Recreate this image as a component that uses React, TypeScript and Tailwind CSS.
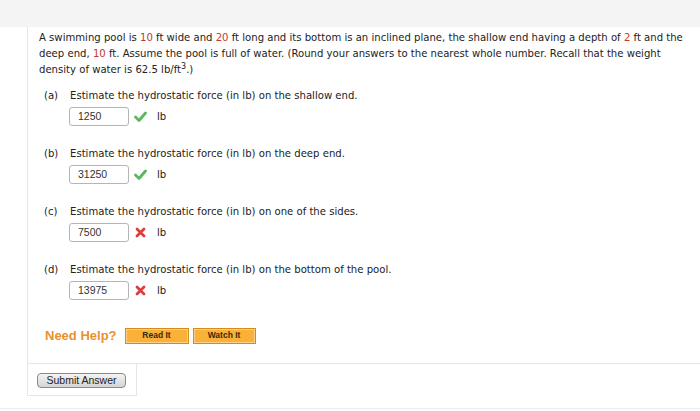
import React from "react";

const verdana = { fontFamily: '"DejaVu Sans", Verdana, sans-serif' };
const arial = { fontFamily: '"Liberation Sans", Arial, sans-serif' };

function Check() {
  return (
    <svg width="13" height="11" viewBox="0 0 13 11">
      <path d="M1.5 6 L5 9.5 L11.5 2" fill="none" stroke="#5cb85c" strokeWidth="2.8" strokeLinecap="round" strokeLinejoin="round" />
    </svg>
  );
}

function Cross() {
  return (
    <svg width="11" height="11" viewBox="0 0 11 11">
      <path d="M2 2 L9 9 M9 2 L2 9" fill="none" stroke="#e23b3b" strokeWidth="2.8" strokeLinecap="round" />
    </svg>
  );
}

function Part({ label, q, value, ok }: { label: string; q: string; value: string; ok: boolean }) {
  return (
    <div className="flex flex-col">
      <div className="flex h-[16px] items-center text-[10.1px] text-[#222]" style={verdana}>
        <span className="w-[31px] pl-[5px]">{label}</span>
        <span>{q}</span>
      </div>
      <div className="mt-[3px] flex h-[19px] items-center pl-[30px]">
        <div
          className="flex h-[19px] w-[60px] items-center rounded-[3px] border border-[#b5b5b5] pl-[8px] text-[10.5px] text-[#333]"
          style={arial}
        >
          {value}
        </div>
        <div className="ml-[5px] flex w-[13px] items-center justify-center">{ok ? <Check /> : <Cross />}</div>
        <span className="ml-[10px] text-[10.1px] text-[#222]" style={verdana}>
          lb
        </span>
      </div>
    </div>
  );
}

export default function App() {
  const red = "text-[#c0392b]";
  return (
    <div className="h-[411px] w-[700px] overflow-hidden bg-white">
      <div className="h-[27px] bg-[#f4f4f4]" />
      <div className="ml-[27px] h-[337px] border-b border-l border-[#e6e6e6] pl-[11px] pt-[3px]">
        <p className="text-[10.1px] leading-[16px] text-[#222]" style={verdana}>
          A swimming pool is <span className={red}>10</span> ft wide and <span className={red}>20</span> ft long and its
          bottom is an inclined plane, the shallow end having a depth of <span className={red}>2</span> ft and the deep
          end, <span className={red}>10</span> ft. Assume the pool is full of water. (Round your answers to the nearest
          whole number. Recall that the weight density of water is 62.5 lb/ft
          <sup className="text-[8px]">3</sup>.)
        </p>
        <div className="mt-[10px] flex flex-col gap-[20px]">
          <Part label="(a)" q="Estimate the hydrostatic force (in lb) on the shallow end." value="1250" ok />
          <Part label="(b)" q="Estimate the hydrostatic force (in lb) on the deep end." value="31250" ok />
          <Part label="(c)" q="Estimate the hydrostatic force (in lb) on one of the sides." value="7500" ok={false} />
          <Part label="(d)" q="Estimate the hydrostatic force (in lb) on the bottom of the pool." value="13975" ok={false} />
        </div>
        <div className="mt-[26px] flex items-center" style={arial}>
          <span className="ml-[6px] text-[13px] font-bold text-[#e8912f]">Need Help?</span>
          <button className="ml-[8px] h-[16px] w-[64px] border border-[#d98a1c] bg-[#f9b138] text-[8.5px] font-bold text-[#3a2a10] shadow-[inset_0_0_0_1px_#fcd089]">
            Read It
          </button>
          <button className="ml-[4px] h-[16px] w-[63px] border border-[#d98a1c] bg-[#f9b138] text-[8.5px] font-bold text-[#3a2a10] shadow-[inset_0_0_0_1px_#fcd089]">
            Watch It
          </button>
        </div>
      </div>
      <div className="ml-[27px] flex h-[32px] w-[110px] items-center border-x border-b border-[#e6e6e6] pl-[9px] pt-[2px]">
        <button
          className="h-[15px] w-[89px] rounded-[4px] border border-[#8a8a8a] bg-gradient-to-b from-[#f4f4f4] to-[#d4d4d4] text-[10.5px] leading-none text-[#222]"
          style={arial}
        >
          Submit Answer
        </button>
      </div>
      <div className="mt-[12px] border-t border-[#ececec]" />
    </div>
  );
}
